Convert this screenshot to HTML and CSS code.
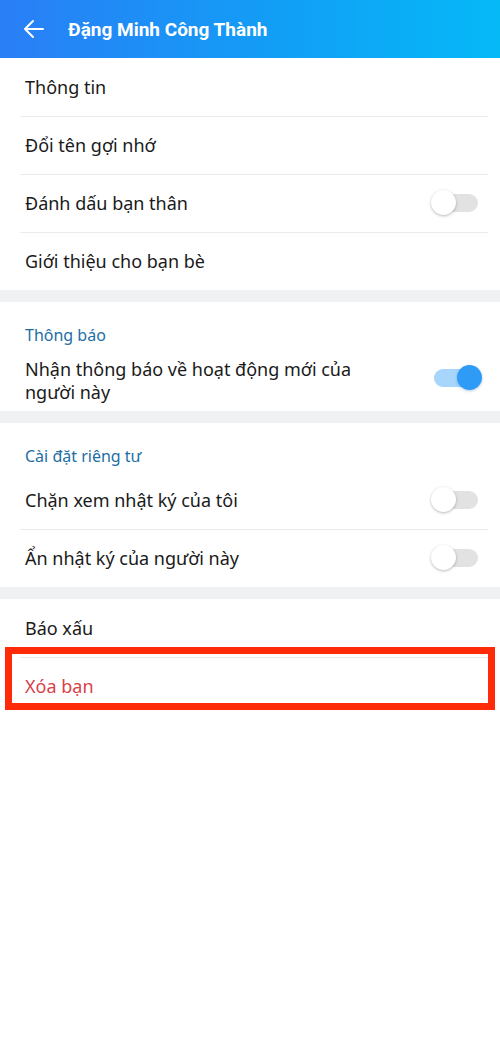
FILE: index.html
```html
<!DOCTYPE html>
<html lang="vi">
<head>
    <meta charset="UTF-8">
    <meta name="viewport" content="width=device-width, initial-scale=1.0">
    <title>Đặng Minh Công Thành</title>
    <link rel="stylesheet" href="styles.css">
</head>
<body>
    <!-- thanh tiêu đề -->
    <header class="top-bar">
        <svg class="back-icon" width="24" height="24" viewBox="0 0 24 24">
            <path d="M21 12H3M11 4l-8 8 8 8" fill="none" stroke="#fff" stroke-width="2" stroke-linecap="round" stroke-linejoin="round"/>
        </svg>
        <h1 class="top-title">Đặng Minh Công Thành</h1>
    </header>

    <div class="group">
        <div class="row">Thông tin</div>
        <div class="row">Đổi tên gợi nhớ</div>
        <div class="row">
            <span>Đánh dấu bạn thân</span>
            <span class="switch"></span>
        </div>
        <div class="row">Giới thiệu cho bạn bè</div>
    </div>

    <div class="group">
        <div class="group-title">Thông báo</div>
        <div class="row row-tall">
            <span class="row-text">Nhận thông báo về hoạt động mới của người này</span>
            <span class="switch on"></span>
        </div>
    </div>

    <div class="group">
        <div class="group-title">Cài đặt riêng tư</div>
        <div class="row">
            <span>Chặn xem nhật ký của tôi</span>
            <span class="switch"></span>
        </div>
        <div class="row">
            <span>Ẩn nhật ký của người này</span>
            <span class="switch"></span>
        </div>
    </div>

    <div class="group">
        <div class="row">Báo xấu</div>
        <div class="row danger">
            <span>Xóa bạn</span>
            <span class="highlight"></span>
        </div>
    </div>
</body>
</html>
```

FILE: styles.css
```css
body {
    margin: 0;
    background: #fff;
    font-family: 'Noto Sans', 'Open Sans', sans-serif;
    color: #1a1a1a;
}
.top-bar {
    height: 58px;
    display: flex;
    align-items: center;
    padding: 0 0 0 22px;
    background: linear-gradient(90deg, #2a7ef6 0%, #129ef6 55%, #05b9f7 100%);
}
.back-icon {
    display: block;
}
.top-title {
    margin: 0 0 0 22px;
    color: #fff;
    font-family: Roboto, 'Noto Sans', sans-serif;
    font-weight: 700;
    font-size: 19px;
}
.group {
    background: #fff;
}
.group + .group {
    border-top: 12px solid #f0f1f3;
}
.group-title {
    color: #1d6ea5;
    font-size: 16px;
    padding: 23px 25px 5px;
    line-height: 20px;
}
.row {
    position: relative;
    height: 58px;
    display: flex;
    align-items: center;
    justify-content: space-between;
    padding: 0 20px 0 25px;
    font-size: 18px;
}
.row + .row::before {
    content: '';
    position: absolute;
    top: 0;
    left: 20px;
    right: 12px;
    border-top: 1px solid #ebebeb;
}
.row-tall {
    height: 61px;
    align-items: flex-start;
    padding-top: 8px;
    box-sizing: border-box;
    line-height: 23px;
}
.row-tall .row-text {
    max-width: 370px;
}
.row-tall .switch {
    margin-top: 11px;
}
.switch {
    position: relative;
    flex-shrink: 0;
    width: 44px;
    height: 18px;
    border-radius: 9px;
    background: #e2e2e2;
    margin-right: 2px;
}
.switch::after {
    content: '';
    position: absolute;
    top: -4px;
    left: -3px;
    width: 25px;
    height: 25px;
    border-radius: 50%;
    background: #fff;
    box-shadow: 0 1px 3px rgba(0, 0, 0, 0.28);
}
.switch.on {
    background: #a7d5fb;
}
.switch.on::after {
    left: auto;
    right: -4px;
    background: #2e9bf6;
    box-shadow: 0 1px 3px rgba(0, 80, 160, 0.3);
}
.danger {
    color: #d8424a;
}
.highlight {
    position: absolute;
    top: -10px;
    left: 5px;
    right: 5px;
    bottom: 5px;
    border: 7px solid #ff2a08;
}
```
